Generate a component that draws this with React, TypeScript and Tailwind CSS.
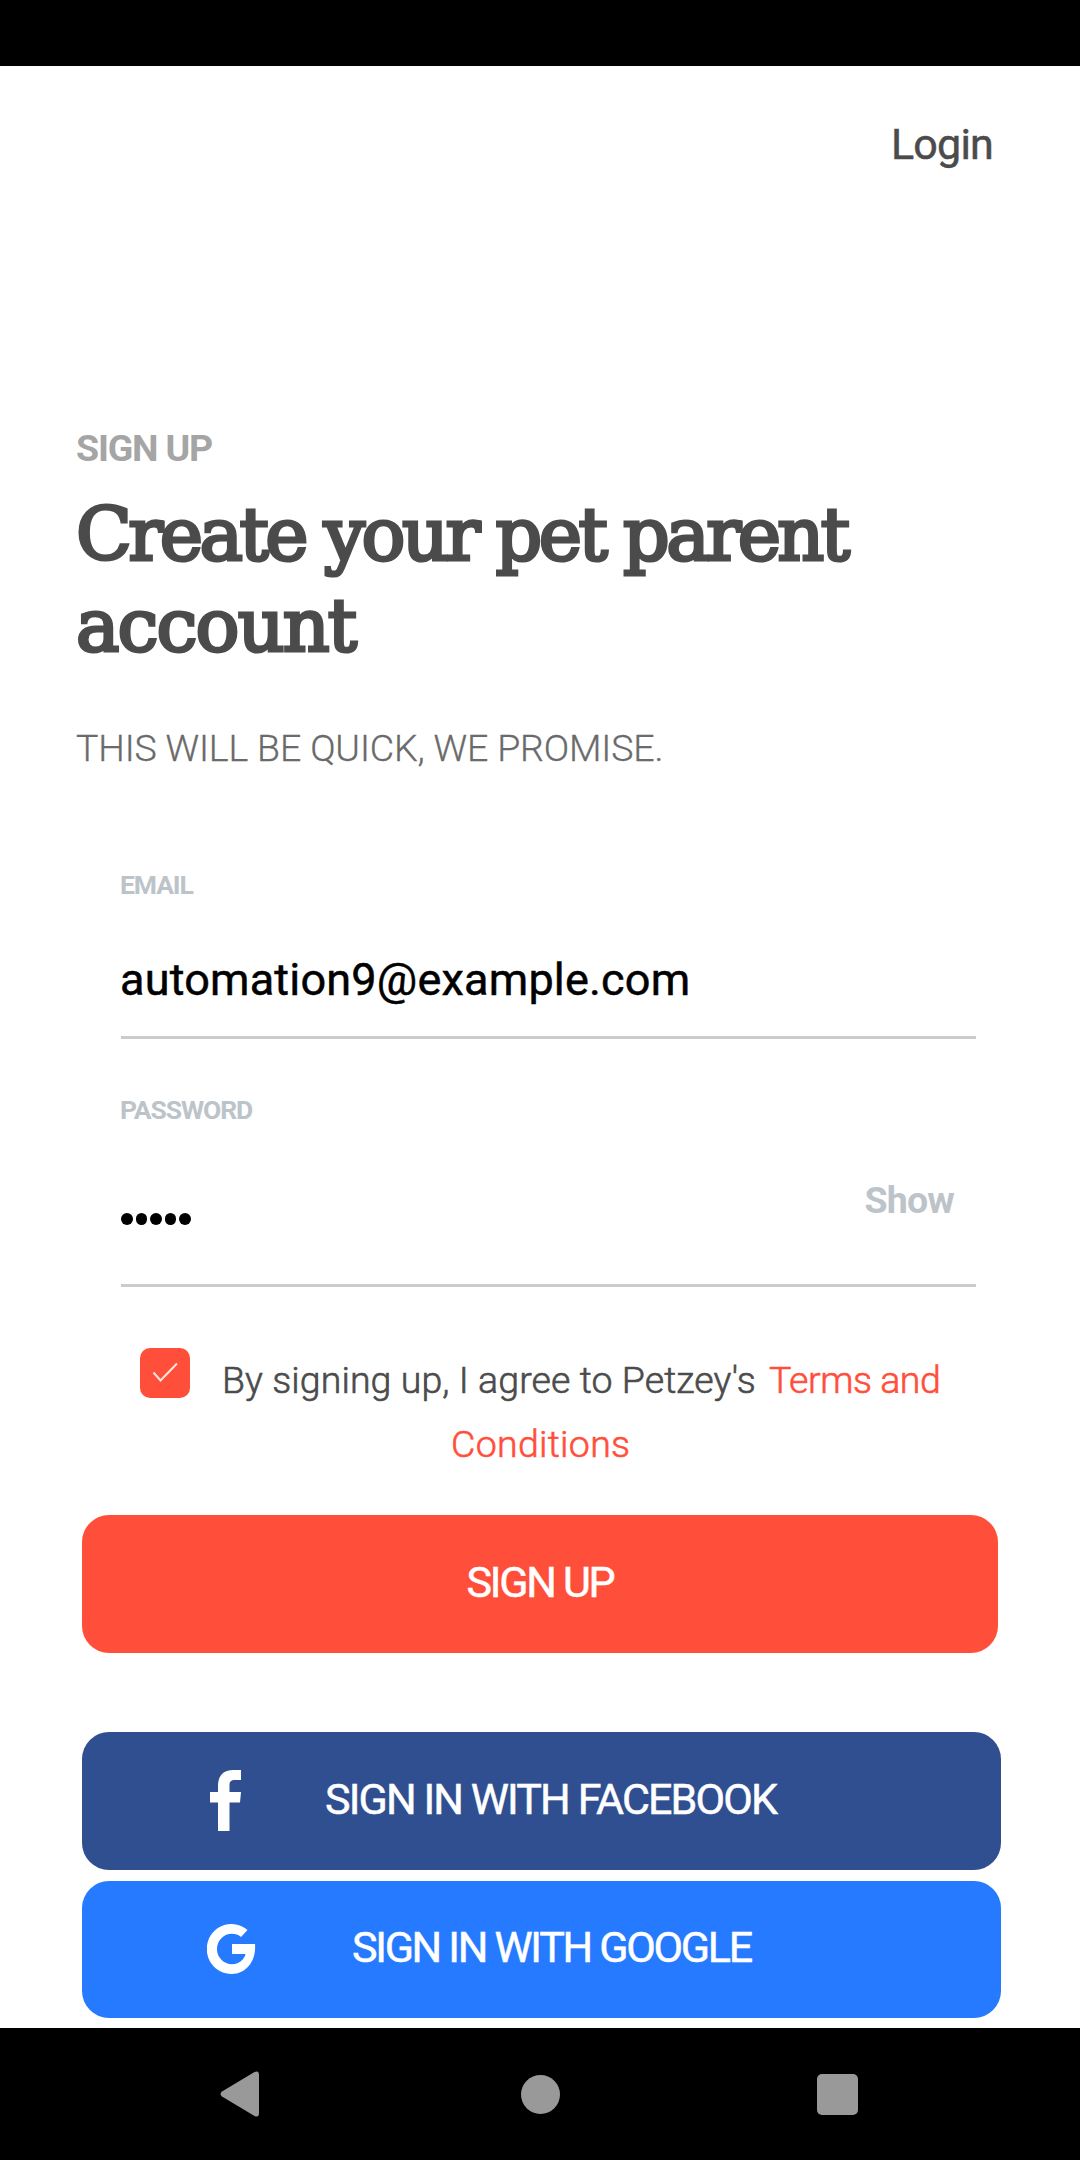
function StatusBar() {
  return <div className="h-[66px] shrink-0 bg-black" />;
}

function Header() {
  return (
    <header className="flex h-[358px] shrink-0 items-start justify-end pt-[54px] pr-[87px]">
      <a className="text-[43px] leading-[48px] tracking-[-0.8px] text-[#4b4b4b] [-webkit-text-stroke:0.5px_#4b4b4b]">Login</a>
    </header>
  );
}

function Intro() {
  return (
    <section className="h-[424px] shrink-0 pl-[76px]">
      <p className="text-[37.5px] leading-[48px] font-bold tracking-[-1.2px] text-[#a5a5a5]">SIGN UP</p>
      <h1 className="mt-[17px] w-[900px] text-[73px] leading-[91px] font-normal tracking-[-3.5px] whitespace-nowrap text-[#4b4b4b] [-webkit-text-stroke:3.2px_#4b4b4b] [font-family:'DejaVu_Serif',serif]">
        <span className="[word-spacing:-1px]">Create your pet parent</span>
        <br />
        <span className="tracking-[-1.9px]">account</span>
      </h1>
      <p className="mt-[53px] text-[37.5px] leading-[48px] font-light tracking-[-0.15px] text-[#6a6a6a] [-webkit-text-stroke:0.3px_#6a6a6a]">
        THIS WILL BE QUICK, WE PROMISE.
      </p>
    </section>
  );
}

function Label({ children }: { children: string }) {
  return (
    <label className="-ml-px block text-[26.5px] leading-[40px] font-bold tracking-[-1.1px] text-[#bcc4ca]">{children}</label>
  );
}

function Fields() {
  return (
    <section className="ml-[121px] w-[855px] shrink-0">
      <div className="h-[191px] border-b-3 border-[#cbcacf] pt-[17px]">
        <Label>EMAIL</Label>
        <div className="mt-[45px] -ml-px text-[45px] leading-[60px] tracking-[0.2px] text-black [-webkit-text-stroke:0.5px_#000]">
          automation9@example.com
        </div>
      </div>
      <div className="h-[248px] border-b-3 border-[#cbcacf] pt-[51px]">
        <Label>PASSWORD</Label>
        <div className="mt-[46px] flex h-[88px] items-start justify-between pr-[22px]">
          <div className="flex gap-[3px] pt-[37px]">
            {[0, 1, 2, 3, 4].map((dot) => (
              <span key={dot} className="size-[11.5px] rounded-full bg-black" />
            ))}
          </div>
          <span className="text-[37.5px] leading-[48px] font-bold tracking-[-0.8px] text-[#bcc4ca]">Show</span>
        </div>
      </div>
    </section>
  );
}

function Agreement() {
  return (
    <section className="mt-[61px] flex h-[167px] shrink-0 pl-[140px]">
      <div className="flex size-[50px] shrink-0 items-center justify-center rounded-[10px] bg-[#ff4f3b]">
        <svg width="50" height="50" viewBox="0 0 50 50" fill="none" stroke="#ffe6e2" strokeWidth="2">
          <path d="M13.5 24.5 L20.5 32.5 L37 15.5" />
        </svg>
      </div>
      <div className="ml-[32px] w-[800px] text-[37.5px] leading-[64px] font-light whitespace-nowrap">
        <div className="flex gap-[13px]">
          <span className="tracking-[0.08px] text-[#4b4b4b] [-webkit-text-stroke:0.6px_#4b4b4b]">
            By signing up, I agree to Petzey's
          </span>
          <span className="tracking-[-0.45px] text-[#ff4f3b] [-webkit-text-stroke:0.6px_#ff4f3b]">Terms and</span>
        </div>
        <div className="pl-[229px] tracking-[0.3px] text-[#ff4f3b] [-webkit-text-stroke:0.6px_#ff4f3b]">Conditions</div>
      </div>
    </section>
  );
}

function FacebookIcon() {
  return (
    <svg className="ml-[128px] shrink-0" width="31" height="61" viewBox="0 0 31 61" fill="#fff">
      <path d="M8 61V32.5H0V22H8V16C8 5.5 13.5 0 23 0H31V10H25C21 10 19.5 11.5 19.5 15V22H31L30 32.5H19.5V61Z" />
    </svg>
  );
}

function GoogleIcon() {
  return (
    <svg className="ml-[125px] shrink-0" width="49" height="50" viewBox="0 0 49 50" fill="#fff">
      <path d="M25 20H48C49.5 36 40 50 24.7 50A24.7 25 0 1 1 40.5 6L34 13C31.5 10.8 28.5 9.8 25 9.8A15 15.2 0 1 0 25 40.2C32 40.2 37 36 38.5 30H25Z" />
    </svg>
  );
}

function Buttons() {
  return (
    <section className="flex shrink-0 flex-col pl-[82px] text-[43px] leading-[52px] whitespace-nowrap text-white [-webkit-text-stroke:0.5px_#fff]">
      <button className="h-[137.5px] w-[916px] rounded-[27px] bg-[#ff4f3b] pb-[3px] tracking-[-2.3px]">SIGN UP</button>
      <button className="mt-[79.5px] flex h-[137.5px] w-[919px] items-center rounded-[27px] bg-[#304f91]">
        <FacebookIcon />
        <span className="ml-[84px] pb-[4px] tracking-[-1.88px]">SIGN IN WITH FACEBOOK</span>
      </button>
      <button className="mt-[11px] flex h-[137.5px] w-[919px] items-center rounded-[27px] bg-[#257aff]">
        <GoogleIcon />
        <span className="ml-[96px] pb-[4px] tracking-[-2.3px]">SIGN IN WITH GOOGLE</span>
      </button>
    </section>
  );
}

function NavigationBar() {
  return (
    <nav className="mt-auto flex h-[132px] shrink-0 items-center justify-between bg-black pr-[222px] pl-[220px]">
      <svg width="39" height="46" viewBox="0 0 39 46" fill="#999">
        <path d="M2 20.5 L34.5 1 Q39 -1 39 4 V42 Q39 47 34.5 45 L2 25.5 Q-1 23 2 20.5Z" />
      </svg>
      <span className="ml-[5px] size-[39px] rounded-full bg-[#999]" />
      <span className="size-[41px] rounded-[5px] bg-[#999]" />
    </nav>
  );
}

export default function App() {
  return (
    <main className="flex h-[2160px] w-[1080px] flex-col overflow-hidden bg-white [font-family:Roboto,sans-serif]">
      <StatusBar />
      <Header />
      <Intro />
      <Fields />
      <Agreement />
      <Buttons />
      <NavigationBar />
    </main>
  );
}
